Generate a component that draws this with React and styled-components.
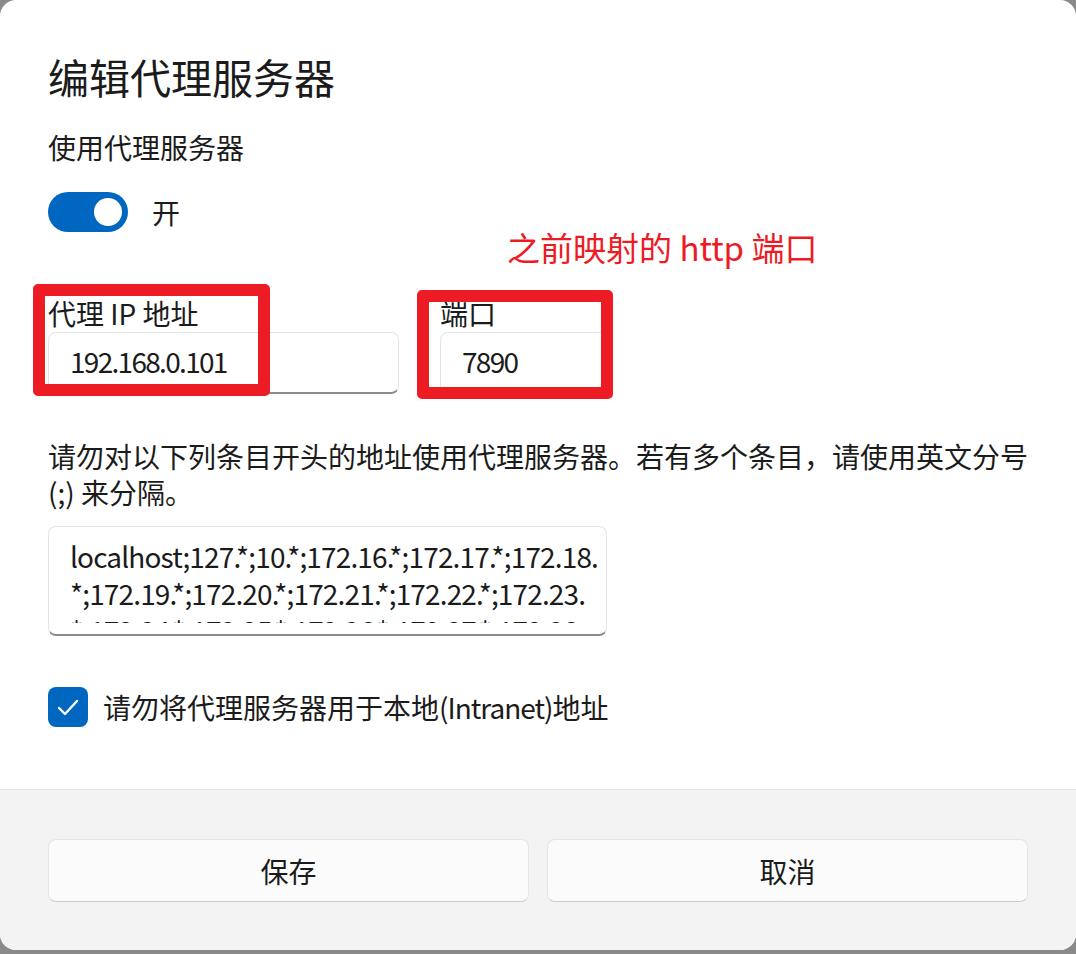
import React from "react";
import styled, { createGlobalStyle } from "styled-components";

const Global = createGlobalStyle`
  html, body { margin: 0; padding: 0; }
  body {
    background: #8a8a8a;
    font-family: "Noto Sans CJK SC", "Noto Sans", sans-serif;
    color: #1b1b1b;
  }
  * { box-sizing: border-box; }
`;

const Dialog = styled.div`
  position: relative;
  width: 1076px;
  height: 950px;
  background: #ffffff;
  border-radius: 16px;
  overflow: hidden;
  display: flex;
  flex-direction: column;
`;

const Content = styled.div`
  flex: 1;
  padding: 50px 48px 0;
  display: flex;
  flex-direction: column;
`;

const Title = styled.h1`
  margin: 0;
  font-size: 41px;
  line-height: 52px;
  font-weight: 400;
`;

const Text = styled.div`
  font-size: 28px;
  line-height: ${(p) => p.$lh || 40}px;
  margin-top: ${(p) => p.$mt || 0}px;
`;

const Latin = styled.span`
  letter-spacing: ${(p) => p.$ls}px;
`;

const ToggleRow = styled.div`
  display: flex;
  align-items: center;
  gap: 24px;
  margin-top: 25px;
  height: 40px;
`;

const Track = styled.div`
  width: 80px;
  height: 40px;
  border-radius: 20px;
  background: #0067c0;
  display: flex;
  align-items: center;
  justify-content: flex-end;
  padding-right: 6px;
`;

const Knob = styled.div`
  width: 28px;
  height: 28px;
  border-radius: 50%;
  background: #ffffff;
`;

const Fields = styled.div`
  display: flex;
  gap: 41px;
  margin-top: 63px;
`;

const Field = styled.div`
  display: flex;
  flex-direction: column;
  gap: 1px;
`;

const Label = styled.div`
  font-size: 28px;
  line-height: 36px;
`;

const Input = styled.div`
  width: ${(p) => p.$w}px;
  height: 62px;
  border: 1px solid #e5e5e5;
  border-bottom: 2px solid #8a8a8a;
  border-radius: 8px;
  padding-left: 21px;
  padding-bottom: 3px;
  display: flex;
  align-items: center;
  font-size: 28px;
  letter-spacing: -1.7px;
  background: #ffffff;
`;

const Desc = styled.p`
  margin: 44px -20px 0 0;
  font-size: 28px;
  line-height: 36px;
`;

const TextArea = styled.div`
  width: 559px;
  height: 110px;
  margin-top: 16px;
  border: 1px solid #e5e5e5;
  border-bottom: 2px solid #8a8a8a;
  border-radius: 8px;
  padding: 11px 3px 11px 21px;
`;

const TextClip = styled.div`
  height: 85px;
  overflow: hidden;
  font-size: 28px;
  line-height: 37px;
  letter-spacing: -0.85px;
`;

const Line = styled.div`
  white-space: nowrap;
`;

const CheckRow = styled.div`
  display: flex;
  align-items: center;
  gap: 15px;
  margin-top: 51px;
  height: 40px;
`;

const CheckBox = styled.div`
  width: 40px;
  height: 40px;
  border-radius: 8px;
  background: #0067c0;
  display: flex;
  align-items: center;
  justify-content: center;
`;

const Footer = styled.div`
  border-top: 1px solid #e5e5e5;
  background: #f3f3f3;
  padding: 49px 48px 48px 48px;
  display: grid;
  grid-template-columns: 1fr 1fr;
  gap: 18px;
`;

const Button = styled.button`
  height: 63px;
  border: 1px solid #e5e5e5;
  border-bottom-color: #cccccc;
  border-radius: 8px;
  background: #fbfbfb;
  font-family: inherit;
  font-size: 28px;
  color: #1b1b1b;
  padding: 0;
`;

const RedBox = styled.div`
  position: absolute;
  left: ${(p) => p.$x}px;
  top: ${(p) => p.$y}px;
  width: ${(p) => p.$w}px;
  height: ${(p) => p.$h}px;
  border: 12px solid #ed1c24;
  border-radius: 5px;
  pointer-events: none;
`;

const Note = styled.div`
  position: absolute;
  left: 507px;
  top: 227px;
  font-size: 33px;
  line-height: 40px;
  color: #ed1c24;
  white-space: nowrap;
`;

export default function App() {
  return (
    <>
      <Global />
      <Dialog>
        <Content>
          <Title>编辑代理服务器</Title>
          <Text $mt={25}>使用代理服务器</Text>
          <ToggleRow>
            <Track>
              <Knob />
            </Track>
            <Text>开</Text>
          </ToggleRow>
          <Fields>
            <Field>
              <Label>代理 IP 地址</Label>
              <Input $w={351}>192.168.0.101</Input>
            </Field>
            <Field>
              <Label>端口</Label>
              <Input $w={168}>7890</Input>
            </Field>
          </Fields>
          <Desc>
            请勿对以下列条目开头的地址使用代理服务器。若有多个条目，请使用英文分号
            <br />
            (;) 来分隔。
          </Desc>
          <TextArea>
            <TextClip>
              <Line>localhost;127.*;10.*;172.16.*;172.17.*;172.18.</Line>
              <Line>*;172.19.*;172.20.*;172.21.*;172.22.*;172.23.</Line>
              <Line>*;172.24.*;172.25.*;172.26.*;172.27.*;172.28.</Line>
            </TextClip>
          </TextArea>
          <CheckRow>
            <CheckBox>
              <svg width="40" height="40" viewBox="0 0 40 40" fill="none">
                <path
                  d="M11 21 L17 27 L29 14"
                  stroke="#ffffff"
                  strokeWidth="2.4"
                  strokeLinecap="round"
                  strokeLinejoin="round"
                />
              </svg>
            </CheckBox>
            <Text>
              请勿将代理服务器用于本地<Latin $ls={-1}>(Intranet)</Latin>地址
            </Text>
          </CheckRow>
        </Content>
        <Footer>
          <Button>保存</Button>
          <Button>取消</Button>
        </Footer>
        <RedBox $x={33} $y={284} $w={237} $h={112} />
        <RedBox $x={417} $y={290} $w={196} $h={109} />
        <Note>之前映射的 http 端口</Note>
      </Dialog>
    </>
  );
}
